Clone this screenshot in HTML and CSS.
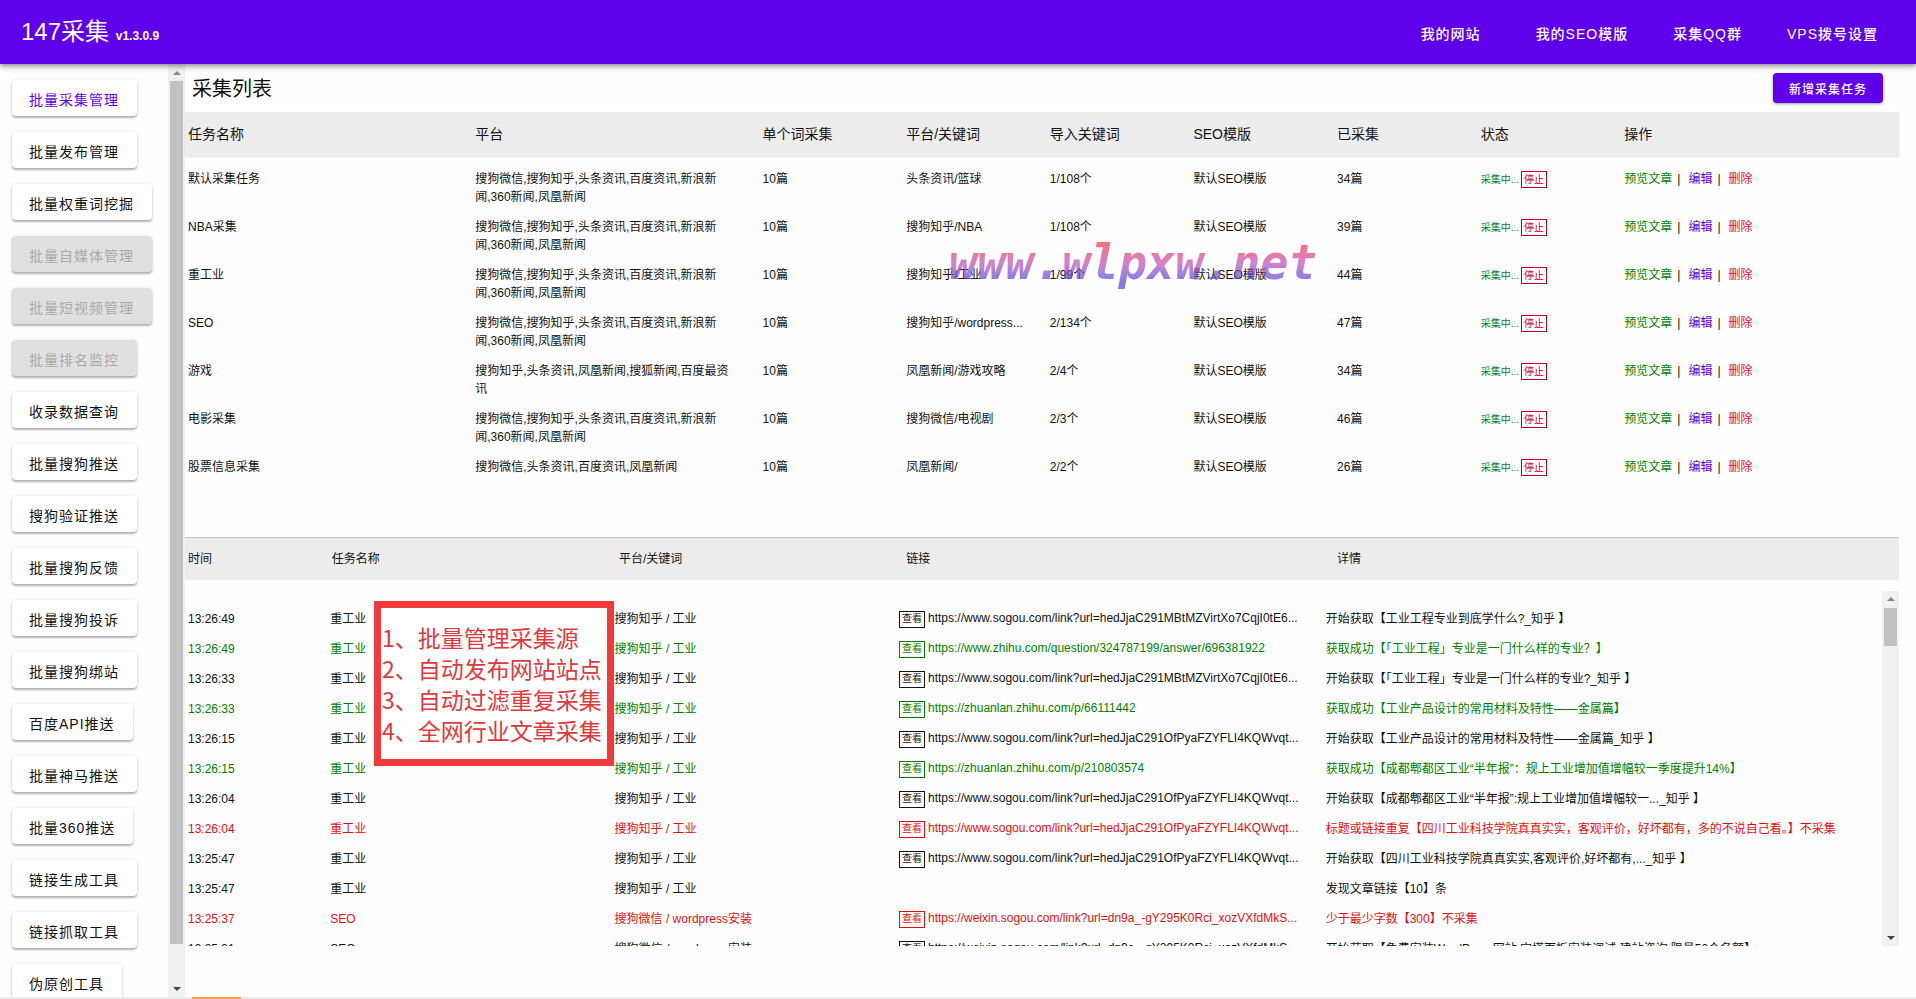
FILE: index.html
```html
<!DOCTYPE html>
<html lang="zh-CN">
<head>
<meta charset="utf-8">
<title>147采集</title>
<link rel="stylesheet" href="styles.css">
</head>
<body>
<header class="topbar">
  <h1 class="brand">147采集 <small class="version">v1.3.0.9</small></h1>
  <nav class="topnav">
    <a class="topnav-link topnav-home" href="#">我的网站</a>
    <a class="topnav-link" href="#">我的SEO模版</a>
    <a class="topnav-link" href="#">采集QQ群</a>
    <a class="topnav-link" href="#">VPS拨号设置</a>
  </nav>
</header>

<div class="workspace">
  <aside class="sidebar">
    <div class="menu">
      <button class="menu-btn active">批量采集管理</button>
      <button class="menu-btn">批量发布管理</button>
      <button class="menu-btn">批量权重词挖掘</button>
      <button class="menu-btn" disabled>批量自媒体管理</button>
      <button class="menu-btn" disabled>批量短视频管理</button>
      <button class="menu-btn" disabled>批量排名监控</button>
      <button class="menu-btn">收录数据查询</button>
      <button class="menu-btn">批量搜狗推送</button>
      <button class="menu-btn">搜狗验证推送</button>
      <button class="menu-btn">批量搜狗反馈</button>
      <button class="menu-btn">批量搜狗投诉</button>
      <button class="menu-btn">批量搜狗绑站</button>
      <button class="menu-btn">百度API推送</button>
      <button class="menu-btn">批量神马推送</button>
      <button class="menu-btn">批量360推送</button>
      <button class="menu-btn">链接生成工具</button>
      <button class="menu-btn">链接抓取工具</button>
      <button class="menu-btn">伪原创工具</button>
    </div>
    <div class="scrollbar menu-scroll">
      <span class="arrow up"></span>
      <div class="track"><div class="thumb"></div></div>
      <span class="arrow down"></span>
    </div>
  </aside>

  <main class="content">
    <div class="title-row">
      <h2 class="title">采集列表</h2>
      <button class="add-btn">新增采集任务</button>
    </div>

    <section class="tasks">
      <table class="task-table">
        <colgroup>
          <col class="c2"><col class="c2"><col class="c1"><col class="c1"><col class="c1"><col class="c1"><col class="c1"><col class="c1"><col>
        </colgroup>
        <thead>
          <tr><th>任务名称</th><th>平台</th><th>单个词采集</th><th>平台/关键词</th><th>导入关键词</th><th>SEO模版</th><th>已采集</th><th>状态</th><th>操作</th></tr>
        </thead>
        <tbody>
          <tr><td>默认采集任务</td><td>搜狗微信,搜狗知乎,头条资讯,百度资讯,新浪新闻,360新闻,凤凰新闻</td><td>10篇</td><td>头条资讯/篮球</td><td>1/108个</td><td>默认SEO模版</td><td>34篇</td><td><span class="state">采集中...</span><button class="tag stop">停止</button></td><td class="ops"><a class="ok" href="#">预览文章</a><i>|</i><a class="edit" href="#">编辑</a><i>|</i><a class="bad" href="#">删除</a></td></tr>
          <tr><td>NBA采集</td><td>搜狗微信,搜狗知乎,头条资讯,百度资讯,新浪新闻,360新闻,凤凰新闻</td><td>10篇</td><td>搜狗知乎/NBA</td><td>1/108个</td><td>默认SEO模版</td><td>39篇</td><td><span class="state">采集中...</span><button class="tag stop">停止</button></td><td class="ops"><a class="ok" href="#">预览文章</a><i>|</i><a class="edit" href="#">编辑</a><i>|</i><a class="bad" href="#">删除</a></td></tr>
          <tr><td>重工业</td><td>搜狗微信,搜狗知乎,头条资讯,百度资讯,新浪新闻,360新闻,凤凰新闻</td><td>10篇</td><td>搜狗知乎/工业</td><td>1/99个</td><td>默认SEO模版</td><td>44篇</td><td><span class="state">采集中...</span><button class="tag stop">停止</button></td><td class="ops"><a class="ok" href="#">预览文章</a><i>|</i><a class="edit" href="#">编辑</a><i>|</i><a class="bad" href="#">删除</a></td></tr>
          <tr><td>SEO</td><td>搜狗微信,搜狗知乎,头条资讯,百度资讯,新浪新闻,360新闻,凤凰新闻</td><td>10篇</td><td>搜狗知乎/wordpress...</td><td>2/134个</td><td>默认SEO模版</td><td>47篇</td><td><span class="state">采集中...</span><button class="tag stop">停止</button></td><td class="ops"><a class="ok" href="#">预览文章</a><i>|</i><a class="edit" href="#">编辑</a><i>|</i><a class="bad" href="#">删除</a></td></tr>
          <tr><td>游戏</td><td>搜狗知乎,头条资讯,凤凰新闻,搜狐新闻,百度最资讯</td><td>10篇</td><td>凤凰新闻/游戏攻略</td><td>2/4个</td><td>默认SEO模版</td><td>34篇</td><td><span class="state">采集中...</span><button class="tag stop">停止</button></td><td class="ops"><a class="ok" href="#">预览文章</a><i>|</i><a class="edit" href="#">编辑</a><i>|</i><a class="bad" href="#">删除</a></td></tr>
          <tr><td>电影采集</td><td>搜狗微信,搜狗知乎,头条资讯,百度资讯,新浪新闻,360新闻,凤凰新闻</td><td>10篇</td><td>搜狗微信/电视剧</td><td>2/3个</td><td>默认SEO模版</td><td>46篇</td><td><span class="state">采集中...</span><button class="tag stop">停止</button></td><td class="ops"><a class="ok" href="#">预览文章</a><i>|</i><a class="edit" href="#">编辑</a><i>|</i><a class="bad" href="#">删除</a></td></tr>
          <tr><td>股票信息采集</td><td>搜狗微信,头条资讯,百度资讯,凤凰新闻</td><td>10篇</td><td>凤凰新闻/</td><td>2/2个</td><td>默认SEO模版</td><td>26篇</td><td><span class="state">采集中...</span><button class="tag stop">停止</button></td><td class="ops"><a class="ok" href="#">预览文章</a><i>|</i><a class="edit" href="#">编辑</a><i>|</i><a class="bad" href="#">删除</a></td></tr>
        </tbody>
      </table>
      <div class="watermark">www.wlpxw.net</div>
    </section>

    <section class="log">
      <div class="log-head">
        <span>时间</span><span>任务名称</span><span>平台/关键词</span><span>链接</span><span>详情</span>
      </div>
      <div class="log-body">
        <div class="log-list">
          <table class="log-table">
            <colgroup><col class="l1"><col class="l2"><col class="l2"><col class="l3"><col></colgroup>
            <tbody>
              <tr><td>13:26:49</td><td>重工业</td><td>搜狗知乎 / 工业</td><td><button class="tag">查看</button>https://www.sogou.com/link?url=hedJjaC291MBtMZVirtXo7CqjI0tE6...</td><td>开始获取【工业工程专业到底学什么?_知乎 】</td></tr>
              <tr class="ok"><td>13:26:49</td><td>重工业</td><td>搜狗知乎 / 工业</td><td><button class="tag">查看</button>https://www.zhihu.com/question/324787199/answer/696381922</td><td>获取成功【「工业工程」专业是一门什么样的专业？】</td></tr>
              <tr><td>13:26:33</td><td>重工业</td><td>搜狗知乎 / 工业</td><td><button class="tag">查看</button>https://www.sogou.com/link?url=hedJjaC291MBtMZVirtXo7CqjI0tE6...</td><td>开始获取【「工业工程」专业是一门什么样的专业?_知乎 】</td></tr>
              <tr class="ok"><td>13:26:33</td><td>重工业</td><td>搜狗知乎 / 工业</td><td><button class="tag">查看</button>https://zhuanlan.zhihu.com/p/66111442</td><td>获取成功【工业产品设计的常用材料及特性——金属篇】</td></tr>
              <tr><td>13:26:15</td><td>重工业</td><td>搜狗知乎 / 工业</td><td><button class="tag">查看</button>https://www.sogou.com/link?url=hedJjaC291OfPyaFZYFLI4KQWvqt...</td><td>开始获取【工业产品设计的常用材料及特性——金属篇_知乎 】</td></tr>
              <tr class="ok"><td>13:26:15</td><td>重工业</td><td>搜狗知乎 / 工业</td><td><button class="tag">查看</button>https://zhuanlan.zhihu.com/p/210803574</td><td>获取成功【成都郫都区工业“半年报”：规上工业增加值增幅较一季度提升14%】</td></tr>
              <tr><td>13:26:04</td><td>重工业</td><td>搜狗知乎 / 工业</td><td><button class="tag">查看</button>https://www.sogou.com/link?url=hedJjaC291OfPyaFZYFLI4KQWvqt...</td><td>开始获取【成都郫都区工业“半年报”:规上工业增加值增幅较一..._知乎 】</td></tr>
              <tr class="bad"><td>13:26:04</td><td>重工业</td><td>搜狗知乎 / 工业</td><td><button class="tag">查看</button>https://www.sogou.com/link?url=hedJjaC291OfPyaFZYFLI4KQWvqt...</td><td>标题或链接重复【四川工业科技学院真真实实，客观评价，好坏都有，多的不说自己看。】不采集</td></tr>
              <tr><td>13:25:47</td><td>重工业</td><td>搜狗知乎 / 工业</td><td><button class="tag">查看</button>https://www.sogou.com/link?url=hedJjaC291OfPyaFZYFLI4KQWvqt...</td><td>开始获取【四川工业科技学院真真实实,客观评价,好坏都有,..._知乎 】</td></tr>
              <tr><td>13:25:47</td><td>重工业</td><td>搜狗知乎 / 工业</td><td></td><td>发现文章链接【10】条</td></tr>
              <tr class="bad"><td>13:25:37</td><td>SEO</td><td>搜狗微信 / wordpress安装</td><td><button class="tag">查看</button>https://weixin.sogou.com/link?url=dn9a_-gY295K0Rci_xozVXfdMkS...</td><td>少于最少字数【300】不采集</td></tr>
              <tr><td>13:25:31</td><td>SEO</td><td>搜狗微信 / wordpress安装</td><td><button class="tag">查看</button>https://weixin.sogou.com/link?url=dn9a_-gY295K0Rci_xozVXfdMkS...</td><td>开始获取【免费安装WordPress网站,宝塔面板安装调试,建站咨询,限量50个名额】</td></tr>
            </tbody>
          </table>
        </div>
        <div class="scrollbar log-scroll">
          <span class="arrow up"></span>
          <div class="track"><div class="thumb"></div></div>
          <span class="arrow down"></span>
        </div>
        <div class="note">
          <p>1、批量管理采集源</p>
          <p>2、自动发布网站站点</p>
          <p>3、自动过滤重复采集</p>
          <p>4、全网行业文章采集</p>
        </div>
      </div>
    </section>
  </main>
</div>
<footer class="strip"><span class="strip-mark"></span></footer>
</body>
</html>
```
FILE: styles.css
```css
* { box-sizing: border-box; }

body {
  margin: 0;
  height: 100vh;
  display: flex;
  flex-direction: column;
  overflow: hidden;
  background: #fefefe;
  color: #111;
  font: 12px/18px "Liberation Sans", "Noto Sans CJK SC", sans-serif;
}

button { font-family: inherit; cursor: pointer; }
a { color: inherit; text-decoration: none; }

/* top bar */
.topbar {
  position: relative;
  z-index: 2;
  flex: none;
  height: 64px;
  padding: 3px 38px 0 21px;
  display: flex;
  align-items: center;
  justify-content: space-between;
  background: #5f00ea;
  color: #fff;
  box-shadow: 0 2px 4px rgba(0, 0, 0, .3), 0 4px 6px rgba(0, 0, 0, .14);
}
.brand { margin: 0; font-size: 24px; line-height: 32px; font-weight: 400; }
.version { font-size: 12px; font-weight: 700; }
.topnav { display: flex; gap: 45px; }
.topnav-link { font-size: 14px; line-height: 36px; font-weight: 500; letter-spacing: 1px; }
.topnav-home { margin-right: 10px; }

.workspace { flex: 1; min-height: 0; display: flex; }

/* sidebar */
.sidebar { flex: none; width: 185px; display: flex; overflow: hidden; }
.menu {
  flex: 1;
  padding: 16px 0 0 12px;
  display: flex;
  flex-direction: column;
  align-items: flex-start;
  gap: 16px;
  overflow: hidden;
}
.menu-btn {
  flex: none;
  height: 36px;
  padding: 1px 18px 0 17px;
  border: 0;
  border-radius: 4px;
  background: #fff;
  color: #111;
  font-size: 14px;
  letter-spacing: 1px;
  white-space: nowrap;
  box-shadow: 0 2px 2px rgba(0, 0, 0, .28), 0 0 4px rgba(0, 0, 0, .08);
}
.menu-btn.active { color: #5f00ea; }
.menu-btn:disabled { background: #e0e0e0; color: #aaa; }

/* scrollbars */
.scrollbar {
  flex: none;
  width: 17px;
  display: flex;
  flex-direction: column;
  background: #f1f1f1;
}
.arrow { flex: none; height: 17px; display: flex; align-items: center; justify-content: center; }
.arrow::before { content: ""; border: 4px solid transparent; }
.arrow.up::before { border-top: 0; border-bottom-color: #888; }
.arrow.down::before { border-bottom: 0; border-top-color: #444; }
.track { flex: 1; padding: 0 2px; }
.thumb { background: #c1c1c1; }
.menu-scroll .thumb { height: 96%; }
.log-scroll .thumb { height: 12%; }

/* content */
.content { flex: 1; min-width: 0; padding: 0 17px 51px 0; display: flex; flex-direction: column; }
.title-row {
  flex: none;
  height: 48px;
  padding: 0 16px 0 7px;
  display: flex;
  align-items: center;
  justify-content: space-between;
}
.title { margin: 0; padding-top: 2px; font-size: 20px; line-height: 32px; font-weight: 400; }
.add-btn {
  height: 30px;
  padding: 0 16px;
  border: 0;
  border-radius: 4px;
  background: #5f00ea;
  color: #fff;
  font-size: 12px;
  font-weight: 500;
  letter-spacing: 1px;
  box-shadow: 0 1px 3px rgba(0, 0, 0, .4);
}

.tasks { position: relative; flex: 423 0 0; min-height: 0; }
.task-table, .log-table { width: 100%; border-collapse: collapse; table-layout: fixed; }
.c2 { width: 16.76%; }
.c1 { width: 8.38%; }
.task-table thead { background: #ededed; box-shadow: 0 1px 2px rgba(0, 0, 0, .12); }
.task-table th {
  height: 44px;
  padding: 0 0 0 3px;
  font-size: 14px;
  font-weight: 400;
  text-align: left;
}
.task-table td { height: 48px; padding: 6px 0 6px 3px; vertical-align: top; white-space: nowrap; }
.task-table td:nth-child(2) { padding-right: 29px; white-space: normal; }
.task-table tbody::before { content: ""; display: block; height: 8px; }

.state { color: #008030; font-size: 10px; }
.tag {
  height: 17px;
  margin: 0 3px 0 0;
  padding: 0 2px;
  border: 1px solid currentColor;
  background: none;
  color: inherit;
  font-size: 10px;
  line-height: 14px;
  vertical-align: middle;
}
.stop { margin-left: 2px; color: #c00020; }
.ops i { margin: 0 8px 0 5px; font-style: normal; }
.ok { color: #008000; }
.edit { color: #5f00ea; }
.bad { color: #e01010; }

.watermark {
  position: absolute;
  left: 764px;
  top: 124px;
  font: italic 700 47px/54px "DejaVu Sans Mono", monospace;
  color: transparent;
  background: linear-gradient(#ff3048 15%, #c050b8 50%, #4848e0 85%);
  background-clip: text;
  -webkit-background-clip: text;
  opacity: .7;
}

/* log */
.log { flex: 408 0 0; min-height: 0; display: flex; flex-direction: column; }
.log-head {
  flex: none;
  height: 43px;
  margin-bottom: 11px;
  display: grid;
  grid-template-columns: 8.38% 16.76% 16.76% 25.14% 1fr;
  align-items: center;
  background: #ededed;
  border-top: 1px solid #c4c4c4;
}
.log-head span { padding-left: 3px; }
.log-body { position: relative; flex: 1; min-height: 0; display: flex; }
.log-list { flex: 1; min-width: 0; padding-top: 13px; overflow: hidden; }
.l1 { width: 8.38%; }
.l2 { width: 16.76%; }
.l3 { width: 25.14%; }
.log-table td { height: 30px; padding: 0 0 0 3px; white-space: nowrap; }

.note {
  position: absolute;
  left: 189px;
  top: 10px;
  width: 240px;
  padding: 14px 0 13px 1px;
  border: 7px solid #f23a3c;
  background: #fff;
  color: #e0383c;
  font: 23px/31px "Noto Sans CJK SC", sans-serif;
  white-space: nowrap;
}
.note p { margin: 0; }

.strip { flex: none; height: 2px; padding-left: 192px; background: #ececec; }
.strip-mark { display: block; width: 49px; height: 2px; background: #f3a05c; }
```
